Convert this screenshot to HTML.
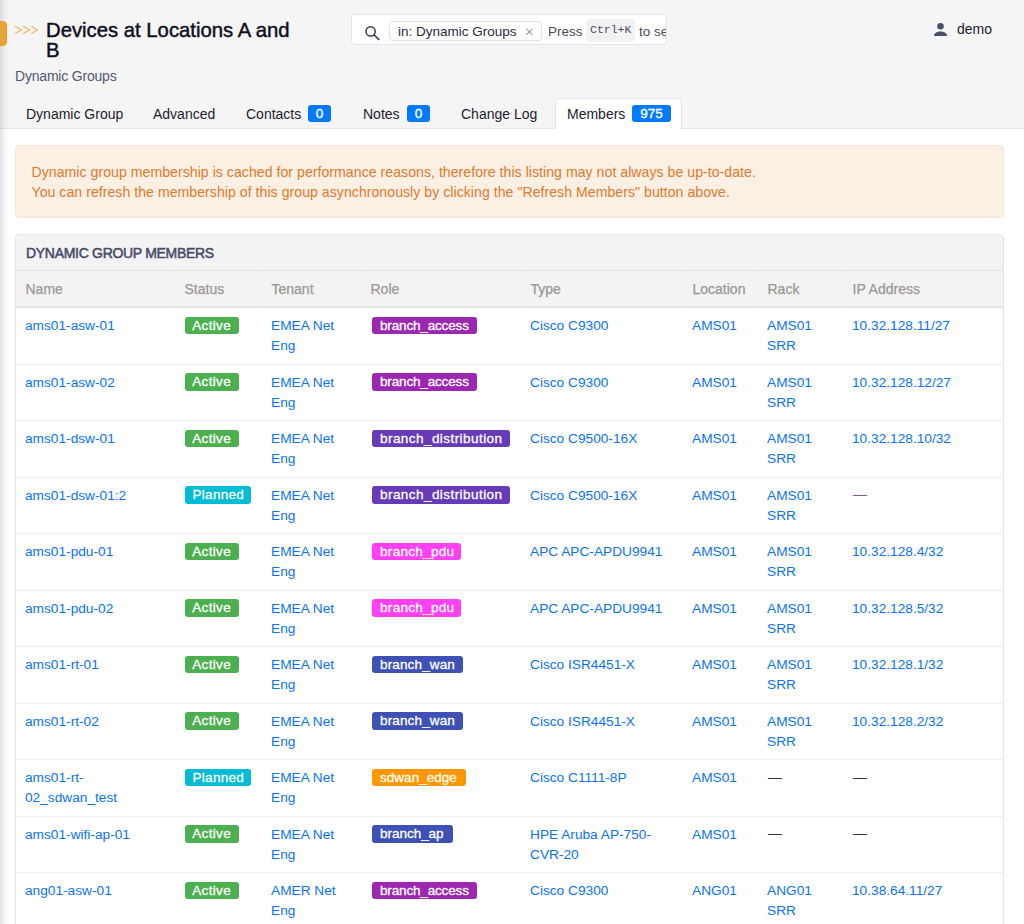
<!DOCTYPE html><html><head><meta charset="utf-8"><style>
*{box-sizing:border-box;margin:0;padding:0}
html,body{width:1024px;height:924px;overflow:hidden;background:#fff;font-family:"Liberation Sans",sans-serif;}
.abs{position:absolute;white-space:nowrap}
#hdr{position:absolute;left:0;top:0;width:1024px;height:129px;background:#f5f5f5;border-bottom:1px solid #e6e6e6}
#shadow{position:absolute;left:0;top:0;width:9px;height:924px;background:linear-gradient(to right,rgba(20,30,60,0.13),rgba(20,30,60,0.04) 50%,rgba(20,30,60,0));z-index:5}
.title{font-size:20.3px;line-height:20px;color:#0f0f1e;font-weight:normal;-webkit-text-stroke:0.45px #0f0f1e}
.sub{font-size:14px;letter-spacing:-0.2px;color:#505872}
.tab{font-size:14px;color:#1c1c2e}
.badge{position:absolute;background:#007bff;color:#fff;font-size:13.5px;font-weight:normal;-webkit-text-stroke:0.35px #fff;text-align:center;border-radius:3px}
.alert{position:absolute;left:15px;top:145px;width:989px;height:73px;background:#fcefe4;border:1px solid #fae5d2;border-radius:4px}
.alert p{position:absolute;left:15.5px;font-size:14.1px;letter-spacing:0.04px;color:#e07a2a;white-space:nowrap}
.panel{position:absolute;left:15px;top:234px;width:989px;height:700px;border:1px solid #e3e3e3;border-radius:4px;background:#fff;overflow:hidden}
.ph{position:absolute;left:0;top:0;width:100%;height:36px;background:#f3f3f3;border-bottom:1px solid #e3e3e3}
.ph span{position:absolute;left:10px;top:10px;font-size:14px;font-weight:normal;-webkit-text-stroke:0.5px #474b68;letter-spacing:-0.3px;color:#474b68;white-space:nowrap}
.th{position:absolute;top:36px;height:37px;background:#f3f3f3;border-bottom:2px solid #e6e6e6;width:100%}
.th span{position:absolute;top:9.5px;font-size:14px;color:#9a9793;-webkit-text-stroke:0.25px #9a9793;white-space:nowrap}
.th i{position:absolute;top:0;width:1px;height:35px;background:#f0f0f0}
.row{position:absolute;left:0;width:100%;border-bottom:1px solid #eeeeee}
.cell{position:absolute;font-size:13.7px;line-height:20px;color:#0a72f5;white-space:nowrap}
.lbl{position:absolute;color:#fff;font-size:13.5px;font-weight:normal;-webkit-text-stroke:0.3px #fff;border-radius:3px;height:17.5px;line-height:18px;white-space:nowrap}
.dash{position:absolute;font-size:14px;color:#30304a}
</style></head><body>
<div id="shadow"></div>
<div id="hdr">
<div class="abs" style="left:-4px;top:21px;width:11px;height:25px;background:#e8a33a;border:1px solid #fb9b1c;border-radius:4px;z-index:6"></div>
<svg class="abs" style="left:14px;top:25px" width="26" height="10" viewBox="0 0 26 10"><g fill="none" stroke="#f3a94a" stroke-width="1.05"><path d="M0.8 1.2 L7.4 4.9 L0.8 8.6"/><path d="M9.1 1.2 L15.6 4.9 L9.1 8.6"/><path d="M17.3 1.2 L23.4 4.9 L17.3 8.6"/></g></svg>
<div class="abs title" style="left:46px;top:20px">Devices at Locations A and<br>B</div>
<div class="abs sub" style="left:15px;top:68px">Dynamic Groups</div>
<div class="abs" style="left:351px;top:14px;width:316px;height:31px;background:#fff;border:1px solid #e4e4e4;border-radius:4px;overflow:hidden">
<svg class="abs" style="left:13px;top:11px" width="16" height="16" viewBox="0 0 16 16"><circle cx="5.6" cy="5.4" r="4.6" fill="none" stroke="#333a58" stroke-width="1.5"/><path d="M9.2 9 L13.8 13.5" stroke="#333a58" stroke-width="1.7" stroke-linecap="round"/></svg>
<div class="abs" style="left:37px;top:6px;width:153px;height:20px;border:1px solid #e0e0e0;border-radius:4px"></div>
<div class="abs" style="left:46px;top:9px;font-size:13.5px;color:#2a2a3e">in: Dynamic Groups</div>
<svg class="abs" style="left:173px;top:12px" width="9" height="9" viewBox="0 0 9 9"><path d="M1.3 1.8 L7.5 7.8 M7.5 1.8 L1.3 7.8" stroke="#66667c" stroke-width="0.95"/></svg>
<div class="abs" style="left:196px;top:9px;font-size:13.5px;color:#4a4a5a">Press</div>
<div class="abs" style="left:234px;top:4px;width:49px;height:23px;background:#f2f2f2;border-radius:4px"></div>
<div class="abs" style="left:238px;top:8px;font-family:'Liberation Mono',monospace;font-size:11.5px;color:#4a4a66">Ctrl+K</div>
<div class="abs" style="left:287px;top:9px;font-size:13.5px;color:#4a4a5a">to search</div>
</div>
<svg class="abs" style="left:933px;top:22px" width="15" height="15" viewBox="0 0 15 15"><circle cx="7.5" cy="4.2" r="3.3" fill="#475066"/><path d="M1 14 C1 10.9 4 9.4 7.5 9.4 C11 9.4 14 10.9 14 14 Z" fill="#475066"/></svg>
<div class="abs" style="left:957px;top:21px;font-size:14px;color:#1c1c2e">demo</div>
<div class="abs" style="left:555px;top:98px;width:127px;height:31px;background:#fff;border:1px solid #e6e6e6;border-bottom:none;border-radius:4px 4px 0 0"></div>
<div class="abs tab" style="left:26px;top:106px">Dynamic Group</div>
<div class="abs tab" style="left:153px;top:106px">Advanced</div>
<div class="abs tab" style="left:246px;top:106px">Contacts</div>
<div class="abs tab" style="left:363px;top:106px">Notes</div>
<div class="abs tab" style="left:461px;top:106px">Change Log</div>
<div class="abs tab" style="left:567px;top:106px">Members</div>
<div class="badge" style="left:308px;top:105px;width:23px;height:17px;line-height:17px">0</div>
<div class="badge" style="left:407px;top:105px;width:23px;height:17px;line-height:17px">0</div>
<div class="badge" style="left:632px;top:105px;width:39px;height:17px;line-height:17px">975</div>
</div>
<div class="alert"><p style="top:18.2px">Dynamic group membership is cached for performance reasons, therefore this listing may not always be up-to-date.</p><p style="top:38.2px">You can refresh the membership of this group asynchronously by clicking the "Refresh Members" button above.</p></div>
<div class="panel">
<div class="ph"><span>DYNAMIC GROUP MEMBERS</span></div>
<div class="th">
<span style="left:9.5px">Name</span>
<span style="left:168.5px">Status</span>
<span style="left:255.5px">Tenant</span>
<span style="left:354.5px">Role</span>
<span style="left:514.5px">Type</span>
<span style="left:676.5px">Location</span>
<span style="left:751.5px">Rack</span>
<span style="left:836.5px">IP Address</span>
<i style="left:158.5px"></i>
<i style="left:245px"></i>
<i style="left:345px"></i>
<i style="left:505px"></i>
<i style="left:666px"></i>
<i style="left:741px"></i>
<i style="left:827px"></i>
</div>
<div class="row" style="top:73.0px;height:56.5px">
<div class="cell" style="left:9px;top:8px">ams01-asw-01</div>
<div class="lbl" style="left:169px;top:8.7px;width:54px;padding-left:7.3px;letter-spacing:0.32px;background:#4caf50">Active</div>
<div class="cell" style="left:255px;top:8px">EMEA Net<br>Eng</div>
<div class="lbl" style="left:356px;top:8.7px;width:104.5px;padding-left:8px;letter-spacing:-0.158px;background:#9c27b0">branch_access</div>
<div class="cell" style="left:514px;top:8px">Cisco C9300</div>
<div class="cell" style="left:676px;top:8px">AMS01</div>
<div class="cell" style="left:751px;top:8px">AMS01<br>SRR</div>
<div class="cell" style="left:836px;top:8px">10.32.128.11/27</div>
</div>
<div class="row" style="top:129.5px;height:56.5px">
<div class="cell" style="left:9px;top:8px">ams01-asw-02</div>
<div class="lbl" style="left:169px;top:8.7px;width:54px;padding-left:7.3px;letter-spacing:0.32px;background:#4caf50">Active</div>
<div class="cell" style="left:255px;top:8px">EMEA Net<br>Eng</div>
<div class="lbl" style="left:356px;top:8.7px;width:104.5px;padding-left:8px;letter-spacing:-0.158px;background:#9c27b0">branch_access</div>
<div class="cell" style="left:514px;top:8px">Cisco C9300</div>
<div class="cell" style="left:676px;top:8px">AMS01</div>
<div class="cell" style="left:751px;top:8px">AMS01<br>SRR</div>
<div class="cell" style="left:836px;top:8px">10.32.128.12/27</div>
</div>
<div class="row" style="top:186.0px;height:56.5px">
<div class="cell" style="left:9px;top:8px">ams01-dsw-01</div>
<div class="lbl" style="left:169px;top:8.7px;width:54px;padding-left:7.3px;letter-spacing:0.32px;background:#4caf50">Active</div>
<div class="cell" style="left:255px;top:8px">EMEA Net<br>Eng</div>
<div class="lbl" style="left:356px;top:8.7px;width:138px;padding-left:8px;letter-spacing:0.444px;background:#673ab7">branch_distribution</div>
<div class="cell" style="left:514px;top:8px">Cisco C9500-16X</div>
<div class="cell" style="left:676px;top:8px">AMS01</div>
<div class="cell" style="left:751px;top:8px">AMS01<br>SRR</div>
<div class="cell" style="left:836px;top:8px">10.32.128.10/32</div>
</div>
<div class="row" style="top:242.5px;height:56.5px">
<div class="cell" style="left:9px;top:8px">ams01-dsw-01:2</div>
<div class="lbl" style="left:169px;top:8.7px;width:66px;padding-left:7.5px;letter-spacing:0.3px;background:#00bcd4">Planned</div>
<div class="cell" style="left:255px;top:8px">EMEA Net<br>Eng</div>
<div class="lbl" style="left:356px;top:8.7px;width:138px;padding-left:8px;letter-spacing:0.444px;background:#673ab7">branch_distribution</div>
<div class="cell" style="left:514px;top:8px">Cisco C9500-16X</div>
<div class="cell" style="left:676px;top:8px">AMS01</div>
<div class="cell" style="left:751px;top:8px">AMS01<br>SRR</div>
<div class="dash" style="left:837px;top:8.5px;color:#7b5e94;">&#8212;</div>
</div>
<div class="row" style="top:299.0px;height:56.5px">
<div class="cell" style="left:9px;top:8px">ams01-pdu-01</div>
<div class="lbl" style="left:169px;top:8.7px;width:54px;padding-left:7.3px;letter-spacing:0.32px;background:#4caf50">Active</div>
<div class="cell" style="left:255px;top:8px">EMEA Net<br>Eng</div>
<div class="lbl" style="left:356px;top:8.7px;width:88.7px;padding-left:8px;letter-spacing:0.311px;background:#ff3ff4">branch_pdu</div>
<div class="cell" style="left:514px;top:8px">APC APC-APDU9941</div>
<div class="cell" style="left:676px;top:8px">AMS01</div>
<div class="cell" style="left:751px;top:8px">AMS01<br>SRR</div>
<div class="cell" style="left:836px;top:8px">10.32.128.4/32</div>
</div>
<div class="row" style="top:355.5px;height:56.5px">
<div class="cell" style="left:9px;top:8px">ams01-pdu-02</div>
<div class="lbl" style="left:169px;top:8.7px;width:54px;padding-left:7.3px;letter-spacing:0.32px;background:#4caf50">Active</div>
<div class="cell" style="left:255px;top:8px">EMEA Net<br>Eng</div>
<div class="lbl" style="left:356px;top:8.7px;width:88.7px;padding-left:8px;letter-spacing:0.311px;background:#ff3ff4">branch_pdu</div>
<div class="cell" style="left:514px;top:8px">APC APC-APDU9941</div>
<div class="cell" style="left:676px;top:8px">AMS01</div>
<div class="cell" style="left:751px;top:8px">AMS01<br>SRR</div>
<div class="cell" style="left:836px;top:8px">10.32.128.5/32</div>
</div>
<div class="row" style="top:412.0px;height:56.5px">
<div class="cell" style="left:9px;top:8px">ams01-rt-01</div>
<div class="lbl" style="left:169px;top:8.7px;width:54px;padding-left:7.3px;letter-spacing:0.32px;background:#4caf50">Active</div>
<div class="cell" style="left:255px;top:8px">EMEA Net<br>Eng</div>
<div class="lbl" style="left:356px;top:8.7px;width:90.5px;padding-left:8px;letter-spacing:0.144px;background:#3f51b5">branch_wan</div>
<div class="cell" style="left:514px;top:8px">Cisco ISR4451-X</div>
<div class="cell" style="left:676px;top:8px">AMS01</div>
<div class="cell" style="left:751px;top:8px">AMS01<br>SRR</div>
<div class="cell" style="left:836px;top:8px">10.32.128.1/32</div>
</div>
<div class="row" style="top:468.5px;height:56.5px">
<div class="cell" style="left:9px;top:8px">ams01-rt-02</div>
<div class="lbl" style="left:169px;top:8.7px;width:54px;padding-left:7.3px;letter-spacing:0.32px;background:#4caf50">Active</div>
<div class="cell" style="left:255px;top:8px">EMEA Net<br>Eng</div>
<div class="lbl" style="left:356px;top:8.7px;width:90.5px;padding-left:8px;letter-spacing:0.144px;background:#3f51b5">branch_wan</div>
<div class="cell" style="left:514px;top:8px">Cisco ISR4451-X</div>
<div class="cell" style="left:676px;top:8px">AMS01</div>
<div class="cell" style="left:751px;top:8px">AMS01<br>SRR</div>
<div class="cell" style="left:836px;top:8px">10.32.128.2/32</div>
</div>
<div class="row" style="top:525.0px;height:56.5px">
<div class="cell" style="left:9px;top:8px">ams01-rt-<br>02_sdwan_test</div>
<div class="lbl" style="left:169px;top:8.7px;width:66px;padding-left:7.5px;letter-spacing:0.3px;background:#00bcd4">Planned</div>
<div class="cell" style="left:255px;top:8px">EMEA Net<br>Eng</div>
<div class="lbl" style="left:356px;top:8.7px;width:93.8px;padding-left:8px;letter-spacing:0.033px;background:#ff9800">sdwan_edge</div>
<div class="cell" style="left:514px;top:8px">Cisco C1111-8P</div>
<div class="cell" style="left:676px;top:8px">AMS01</div>
<div class="dash" style="left:752px;top:8.5px">&#8212;</div>
<div class="dash" style="left:837px;top:8.5px;">&#8212;</div>
</div>
<div class="row" style="top:581.5px;height:56.5px">
<div class="cell" style="left:9px;top:8px">ams01-wifi-ap-01</div>
<div class="lbl" style="left:169px;top:8.7px;width:54px;padding-left:7.3px;letter-spacing:0.32px;background:#4caf50">Active</div>
<div class="cell" style="left:255px;top:8px">EMEA Net<br>Eng</div>
<div class="lbl" style="left:356px;top:8.7px;width:80.5px;padding-left:8px;letter-spacing:-0.025px;background:#3f51b5">branch_ap</div>
<div class="cell" style="left:514px;top:8px">HPE Aruba AP-750-<br>CVR-20</div>
<div class="cell" style="left:676px;top:8px">AMS01</div>
<div class="dash" style="left:752px;top:8.5px">&#8212;</div>
<div class="dash" style="left:837px;top:8.5px;">&#8212;</div>
</div>
<div class="row" style="top:638.0px;height:56.5px">
<div class="cell" style="left:9px;top:8px">ang01-asw-01</div>
<div class="lbl" style="left:169px;top:8.7px;width:54px;padding-left:7.3px;letter-spacing:0.32px;background:#4caf50">Active</div>
<div class="cell" style="left:255px;top:8px">AMER Net<br>Eng</div>
<div class="lbl" style="left:356px;top:8.7px;width:104.5px;padding-left:8px;letter-spacing:-0.158px;background:#9c27b0">branch_access</div>
<div class="cell" style="left:514px;top:8px">Cisco C9300</div>
<div class="cell" style="left:676px;top:8px">ANG01</div>
<div class="cell" style="left:751px;top:8px">ANG01<br>SRR</div>
<div class="cell" style="left:836px;top:8px">10.38.64.11/27</div>
</div>
</div>
</body></html>
